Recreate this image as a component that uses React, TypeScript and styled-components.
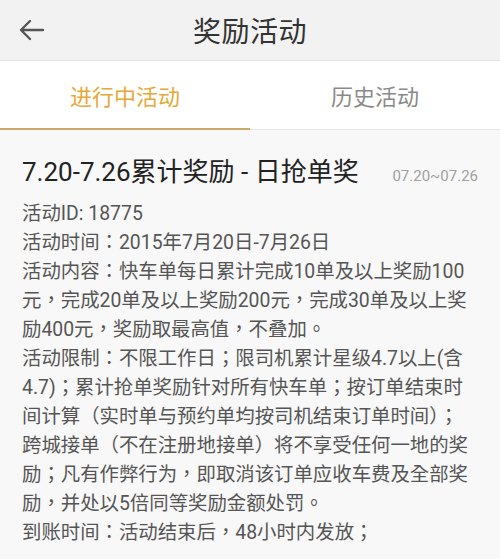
import styled, { createGlobalStyle } from "styled-components"

const GlobalStyle = createGlobalStyle`
    html, body {
        margin:0;
        padding:0;
        background-color:#f8f8f8;
    }
    body {
        font-family:"Roboto", "Noto Sans CJK TC", sans-serif;
    }
`

const Page = styled.div`
    width:500px;
    height:559px;
    overflow:hidden;
    display:flex;
    flex-direction:column;
    background-color:#f8f8f8;
`

const Header = styled.header`
    height:60px;
    background-color:#f2f2f2;
    border-bottom:1px solid #e2e2e2;
    display:grid;
    grid-template-columns:70px 1fr 70px;
    align-items:center;
`

const BackButton = styled.button`
    background:none;
    border:none;
    padding:0 0 0 18px;
    display:flex;
    align-items:center;
    height:100%;
    cursor:pointer;
`

const Title = styled.h1`
    margin:0;
    text-align:center;
    font-size:28px;
    font-weight:400;
    color:#333;
    letter-spacing:0.5px;
`

const Tabs = styled.nav`
    height:68px;
    background-color:#fff;
    display:flex;
    border-bottom:1px solid #e4e4e4;
`

const Tab = styled.div<{active?:boolean}>`
    flex:1;
    display:flex;
    align-items:center;
    justify-content:center;
    font-size:22px;
    padding-top:1px;
    color:${({active}) => active ? "#e6a937" : "#8a8a8a"};
    border-bottom:${({active}) => active ? "2px solid #caa965" : "2px solid transparent"};
    margin-bottom:-1px;
`

const Card = styled.section`
    padding:21px 22px 0 22px;
`

const CardHead = styled.div`
    display:flex;
    align-items:baseline;
    justify-content:space-between;
    margin-bottom:11px;
`

const CardTitle = styled.h2`
    margin:0;
    font-size:26px;
    font-weight:400;
    color:#222;
`

const DateRange = styled.span`
    font-size:15px;
    color:#a0a0a0;
`

const Body = styled.div`
    font-size:19.4px;
    line-height:29px;
    color:#555;
    white-space:nowrap;
`

const Line = styled.p`
    margin:0;
`

const ArrowIcon = () => (
    <svg width="28" height="24" viewBox="0 0 28 24" fill="none">
        <path d="M25 12H4M12 3l-9 9 9 9" stroke="#555" strokeWidth="2.4" strokeLinecap="round" strokeLinejoin="round" />
    </svg>
)

const lines = [
    "活动ID: 18775",
    "活动时间：2015年7月20日-7月26日",
    "活动内容：快车单每日累计完成10单及以上奖励100",
    "元，完成20单及以上奖励200元，完成30单及以上奖",
    "励400元，奖励取最高值，不叠加。",
    "活动限制：不限工作日；限司机累计星级4.7以上(含",
    "4.7)；累计抢单奖励针对所有快车单；按订单结束时",
    "间计算（实时单与预约单均按司机结束订单时间）；",
    "跨城接单（不在注册地接单）将不享受任何一地的奖",
    "励；凡有作弊行为，即取消该订单应收车费及全部奖",
    "励，并处以5倍同等奖励金额处罚。",
    "到账时间：活动结束后，48小时内发放；",
]

const App = () => {
    return (
        <Page>
            <GlobalStyle />
            <Header>
                <BackButton><ArrowIcon /></BackButton>
                <Title>奖励活动</Title>
                <div />
            </Header>
            <Tabs>
                <Tab active>进行中活动</Tab>
                <Tab>历史活动</Tab>
            </Tabs>
            <Card>
                <CardHead>
                    <CardTitle>7.20-7.26累计奖励 - 日抢单奖</CardTitle>
                    <DateRange>07.20~07.26</DateRange>
                </CardHead>
                <Body>
                    {lines.map((text, i) => <Line key={i}>{text}</Line>)}
                </Body>
            </Card>
        </Page>
    )
}

export default App
